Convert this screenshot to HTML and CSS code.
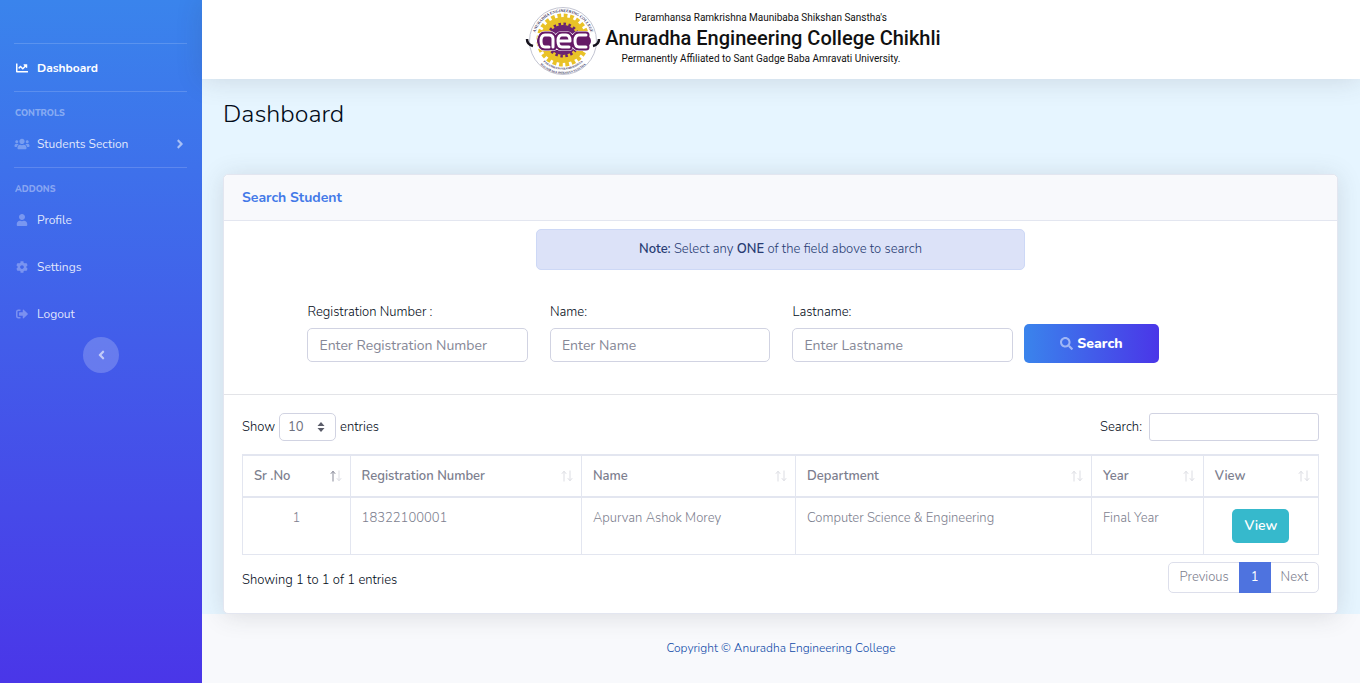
FILE: index.html
```html
<!DOCTYPE html>
<html lang="en">
<head>
<meta charset="utf-8">
<meta name="viewport" content="width=device-width, initial-scale=1">
<title>Dashboard</title>
<link rel="stylesheet" href="styles.css">
</head>
<body>
<svg class="sprite" aria-hidden="true">
  <symbol id="chart" viewBox="0 0 512 512"><path d="M496 384H64V80c0-8.840-7.160-16-16-16H16C7.160 64 0 71.160 0 80v336c0 17.670 14.330 32 32 32h464c8.840 0 16-7.160 16-16v-32c0-8.840-7.160-16-16-16zM464 96H345.940c-21.380 0-32.090 25.850-16.970 40.970l32.400 32.400L288 242.750l-73.370-73.370c-12.500-12.500-32.760-12.500-45.250 0l-68.690 68.690c-6.250 6.250-6.250 16.380 0 22.630l22.620 22.620c6.250 6.250 16.380 6.250 22.630 0L192 237.250l73.370 73.370c12.500 12.500 32.760 12.500 45.250 0l96-96 32.400 32.400c15.120 15.120 40.970 4.410 40.970-16.970V112c.01-8.840-7.150-16-15.990-16z"/></symbol>
  <symbol id="users" viewBox="0 0 640 512"><path d="M96 224c35.3 0 64-28.7 64-64s-28.7-64-64-64-64 28.7-64 64 28.7 64 64 64zm448 0c35.3 0 64-28.7 64-64s-28.7-64-64-64-64 28.7-64 64 28.7 64 64 64zm32 32h-64c-17.6 0-33.5 7.1-45.1 18.6 40.3 22.1 68.9 62 75.1 109.4h66c17.7 0 32-14.3 32-32v-32c0-35.3-28.7-64-64-64zm-256 0c61.900 0 112-50.100 112-112S381.900 32 320 32 208 82.100 208 144s50.100 112 112 112zm76.800 32h-8.300c-20.800 10-43.900 16-68.500 16s-47.600-6-68.500-16h-8.300C179.600 288 128 339.600 128 403.200V432c0 26.500 21.500 48 48 48h288c26.500 0 48-21.500 48-48v-28.800c0-63.600-51.600-115.200-115.200-115.200zm-223.700-13.400C161.500 263.100 145.600 256 128 256H64c-35.300 0-64 28.700-64 64v32c0 17.700 14.300 32 32 32h65.900c6.300-47.400 34.900-87.300 75.200-109.400z"/></symbol>
  <symbol id="user" viewBox="0 0 448 512"><path d="M224 256c70.7 0 128-57.3 128-128S294.7 0 224 0 96 57.3 96 128s57.3 128 128 128zm89.6 32h-16.7c-22.2 10.2-46.9 16-72.9 16s-50.6-5.8-72.9-16h-16.700C60.200 288 0 348.200 0 422.400V464c0 26.500 21.500 48 48 48h352c26.500 0 48-21.500 48-48v-41.600c0-74.200-60.200-134.400-134.400-134.400z"/></symbol>
  <symbol id="cog" viewBox="0 0 512 512"><path d="M487.4 315.7l-42.6-24.6c4.3-23.2 4.3-47 0-70.2l42.6-24.6c4.9-2.8 7.1-8.6 5.5-14-11.1-35.6-30-67.8-54.7-94.6-3.8-4.1-10-5.1-14.8-2.3L380.8 110c-17.9-15.4-38.5-27.3-60.8-35.1V25.8c0-5.6-3.9-10.5-9.4-11.7-36.7-8.2-74.3-7.8-109.2 0-5.5 1.2-9.4 6.1-9.4 11.7V75c-22.2 7.9-42.8 19.8-60.8 35.1L88.7 85.5c-4.9-2.8-11-1.9-14.8 2.3-24.7 26.7-43.6 58.9-54.7 94.6-1.7 5.4.6 11.2 5.5 14L67.3 221c-4.3 23.2-4.3 47 0 70.2l-42.6 24.6c-4.9 2.8-7.1 8.6-5.5 14 11.1 35.6 30 67.8 54.7 94.6 3.8 4.1 10 5.1 14.8 2.3l42.6-24.6c17.9 15.4 38.5 27.3 60.8 35.1v49.2c0 5.6 3.9 10.5 9.4 11.7 36.7 8.2 74.3 7.8 109.2 0 5.5-1.2 9.4-6.1 9.4-11.7v-49.2c22.2-7.9 42.8-19.8 60.8-35.1l42.6 24.6c4.9 2.8 11 1.9 14.8-2.3 24.7-26.7 43.6-58.9 54.7-94.6 1.5-5.5-.7-11.3-5.6-14.1zM256 336c-44.1 0-80-35.900-80-80s35.900-80 80-80 80 35.900 80 80-35.900 80-80 80z"/></symbol>
  <symbol id="logout" viewBox="0 0 512 512"><path d="M497 273L329 441c-15 15-41 4.5-41-17v-96H152c-13.3 0-24-10.7-24-24v-96c0-13.3 10.7-24 24-24h136V88c0-21.4 25.9-32 41-17l168 168c9.3 9.4 9.3 24.6 0 34zM192 436v-40c0-6.6-5.4-12-12-12H96c-17.7 0-32-14.3-32-32V160c0-17.7 14.3-32 32-32h84c6.6 0 12-5.4 12-12V76c0-6.6-5.4-12-12-12H96c-53 0-96 43-96 96v192c0 53 43 96 96 96h84c6.6 0 12-5.4 12-12z"/></symbol>
  <symbol id="search" viewBox="0 0 512 512"><path d="M505 442.7L405.3 343c-4.5-4.5-10.6-7-17-7H372c27.6-35.3 44-79.7 44-128C416 93.1 322.9 0 208 0S0 93.1 0 208s93.1 208 208 208c48.3 0 92.7-16.4 128-44v16.3c0 6.4 2.5 12.5 7 17l99.7 99.7c9.4 9.4 24.6 9.4 33.9 0l28.3-28.3c9.4-9.4 9.4-24.6.1-34zM208 336c-70.7 0-128-57.2-128-128 0-70.7 57.2-128 128-128 70.7 0 128 57.2 128 128 0 70.700-57.200 128-128 128z"/></symbol>
  <symbol id="angle" viewBox="0 0 256 512"><path d="M224.3 273l-136 136c-9.4 9.4-24.6 9.4-33.9 0l-22.6-22.6c-9.4-9.4-9.4-24.6 0-33.9l96.4-96.4-96.4-96.4c-9.4-9.4-9.4-24.6 0-33.9L54.3 103c9.4-9.4 24.6-9.4 33.9 0l136 136c9.5 9.4 9.5 24.6.1 34z"/></symbol>
  <symbol id="sort" viewBox="0 0 12 12"><path d="M3 11.500V1.500M.8 3.800L3 1.200l2.200 2.600" fill="none" stroke="currentColor"/><path d="M9 .5v10M6.800 8.200L9 10.800l2.200-2.600" fill="none" stroke="#dcdde3"/></symbol>
</svg>

<aside class="sidebar">
  <nav class="nav">
    <hr class="rule">
    <a class="link active" href="#"><svg class="icon"><use href="#chart"/></svg><span>Dashboard</span></a>
    <hr class="rule">
    <h2 class="group">CONTROLS</h2>
    <a class="link" href="#"><svg class="icon"><use href="#users"/></svg><span>Students Section</span><svg class="caret"><use href="#angle"/></svg></a>
    <hr class="rule">
    <h2 class="group">ADDONS</h2>
    <a class="link" href="#"><svg class="icon"><use href="#user"/></svg><span>Profile</span></a>
    <a class="link" href="#"><svg class="icon"><use href="#cog"/></svg><span>Settings</span></a>
    <a class="link" href="#"><svg class="icon"><use href="#logout"/></svg><span>Logout</span></a>
  </nav>
  <button class="toggle" type="button" aria-label="Collapse sidebar"><svg class="toggle-icon" viewBox="0 0 256 512"><path d="M31.700 239l136-136c9.400-9.400 24.600-9.400 33.900 0l22.600 22.600c9.400 9.400 9.400 24.600 0 33.900L127.900 256l96.400 96.400c9.400 9.400 9.400 24.600 0 33.900L201.700 409c-9.400 9.400-24.600 9.400-33.900 0l-136-136c-9.500-9.400-9.500-24.600-.1-34z"/></svg></button>
</aside>

<div class="page">
  <header class="topbar">
    <svg class="crest" viewBox="0 0 76 72" aria-label="Anuradha Engineering College crest">
      <defs>
        <path id="arc-top" d="M9 36a29 29 0 0 1 58 0"/>
        <path id="arc-bottom" d="M9.500 41a29 29 0 0 0 57 0"/>
        <path id="arc-low" d="M6 42a32.500 32.500 0 0 0 64 0"/>
        <path id="monogram" d="M28 42V34q0-4-4-4h-4q-4 0-4 6t4 6h4M33 36h12q0-6-4-6h-4q-4 0-4 6t4 6h7M61 30h-7q-4 0-4 6t4 6h7"/>
      </defs>
      <circle cx="38" cy="36" r="33.500" fill="#fff" stroke="#c3c5d2"/>
      <circle cx="38" cy="35" r="23" fill="#e9c227"/>
      <circle cx="38" cy="35" r="24" fill="none" stroke="#e9c227" stroke-width="5" stroke-dasharray="3.700 2.583"/>
      <circle cx="38" cy="35" r="15" fill="#6a2270"/>
      <circle cx="38" cy="35" r="16" fill="none" stroke="#6a2270" stroke-width="3" stroke-dasharray="2.500 2.527"/>
      <g class="crest-text">
        <text class="crest-title"><textPath href="#arc-top" startOffset="50%">ANURADHA ENGINEERING COLLEGE</textPath></text>
        <text><textPath href="#arc-bottom" startOffset="50%">PARAMHANSA RAMKRISHNA</textPath><textPath href="#arc-low" startOffset="50%">MAUNIBABA SHIKSHAN SANSTHA</textPath></text>
      </g>
      <path d="M2 34c0 3 2 6 6 7M74 34c0 3-2 6-6 7" fill="none" stroke="#15121c" stroke-width="2.500"/>
      <g fill="none" stroke-linecap="round" stroke-linejoin="round">
        <use href="#monogram" stroke="#fff" stroke-width="8"/>
        <use href="#monogram" stroke="#651a66" stroke-width="7"/>
        <path d="M18 36h42" stroke="#651a66" stroke-width="12"/>
        <use href="#monogram" stroke="#fff" stroke-width="3"/>
      </g>
    </svg>
    <div class="brand">
      <p class="brand-line">Paramhansa Ramkrishna Maunibaba Shikshan Sanstha's</p>
      <p class="brand-name">Anuradha Engineering College Chikhli</p>
      <p class="brand-line">Permanently Affiliated to Sant Gadge Baba Amravati University.</p>
    </div>
  </header>

  <main class="content">
    <h1 class="title">Dashboard</h1>
    <section class="card">
      <h2 class="card-head">Search Student</h2>
      <div class="note"><b>Note:</b> Select any <b>ONE</b> of the field above to search</div>
      <form class="search-form">
        <div class="fields">
          <div class="field"><label for="reg">Registration Number :</label><input id="reg" class="input" type="text" placeholder="Enter Registration Number"></div>
          <div class="field"><label for="first">Name:</label><input id="first" class="input" type="text" placeholder="Enter Name"></div>
          <div class="field"><label for="last">Lastname:</label><input id="last" class="input" type="text" placeholder="Enter Lastname"></div>
        </div>
        <button class="search-btn" type="button"><svg class="search-icon"><use href="#search"/></svg>Search</button>
      </form>
      <hr class="divider">
      <div class="results">
        <div class="tools">
          <div class="length">
            <label for="length">Show</label>
            <span class="select-wrap">
              <select id="length" class="select"><option>10</option><option>25</option><option>50</option></select>
              <svg class="select-arrow" viewBox="0 0 8 10"><path d="M4 0l3.500 4h-7zM4 10l3.500-4h-7z"/></svg>
            </span>
            <span>entries</span>
          </div>
          <div class="filter"><label for="filter">Search:</label><input id="filter" class="filter-input" type="search"></div>
        </div>
        <table class="table">
          <colgroup><col class="c1"><col class="c2"><col class="c3"><col class="c4"><col class="c5"><col class="c6"></colgroup>
          <thead><tr>
            <th><div class="th">Sr .No<svg class="sort sorted"><use href="#sort"/></svg></div></th>
            <th><div class="th">Registration Number<svg class="sort"><use href="#sort"/></svg></div></th>
            <th><div class="th">Name<svg class="sort"><use href="#sort"/></svg></div></th>
            <th><div class="th">Department<svg class="sort"><use href="#sort"/></svg></div></th>
            <th><div class="th">Year<svg class="sort"><use href="#sort"/></svg></div></th>
            <th><div class="th">View<svg class="sort"><use href="#sort"/></svg></div></th>
          </tr></thead>
          <tbody><tr>
            <td class="center">1</td><td>18322100001</td><td>Apurvan Ashok Morey</td><td>Computer Science &amp; Engineering</td><td>Final Year</td>
            <td class="center"><button class="view-btn" type="button">View</button></td>
          </tr></tbody>
        </table>
        <div class="table-foot">
          <p class="info">Showing 1 to 1 of 1 entries</p>
          <nav class="pager" aria-label="Pages"><a class="page-link" href="#">Previous</a><a class="page-link current" href="#">1</a><a class="page-link" href="#">Next</a></nav>
        </div>
      </div>
    </section>
  </main>
  <footer class="footer">Copyright © Anuradha Engineering College</footer>
</div>
</body>
</html>
```
FILE: styles.css
```css
* { box-sizing: border-box; }

body {
  margin: 0;
  display: flex;
  min-height: 100vh;
  font: 300 13px/20px Nunito, Lato, sans-serif;
  color: #020b18;
  background: #f8f9fc;
}

h1, h2, p { margin: 0; }
a { text-decoration: none; }
button, input, select { font-family: inherit; }
.sprite { position: absolute; width: 0; height: 0; }

.sidebar {
  width: 202px;
  flex-shrink: 0;
  padding-top: 43px;
  background: linear-gradient(180deg, #3a84ec 0%, #4a36e8 100%);
  display: flex;
  flex-direction: column;
  align-items: center;
}
.nav { width: 100%; padding: 0 15px 0 14px; }
.rule { height: 1px; margin: 0; border: 0; background: rgba(255, 255, 255, 0.16); }
.link {
  display: flex;
  align-items: center;
  height: 47px;
  gap: 7px;
  font-size: 12px;
  font-weight: 400;
  color: rgba(255, 255, 255, 0.85);
}
.link.active { color: #fff; font-weight: 700; }
.icon { width: 16px; height: 12px; fill: rgba(255, 255, 255, 0.3); }
.active .icon { fill: #fff; }
.caret { width: 8px; height: 14px; margin-left: auto; margin-right: 3px; fill: rgba(255, 255, 255, 0.55); }
.group {
  padding: 14px 0 0 1px;
  font-size: 9px;
  line-height: 14px;
  font-weight: 800;
  color: rgba(255, 255, 255, 0.4);
}
.toggle {
  width: 36px;
  height: 36px;
  padding: 0;
  border: 0;
  border-radius: 50%;
  background: rgba(255, 255, 255, 0.2);
  display: grid;
  place-items: center;
}
.toggle-icon { width: 7px; height: 14px; fill: rgba(255, 255, 255, 0.6); }

.page { flex: 1; min-width: 0; display: flex; flex-direction: column; }
.topbar {
  z-index: 1;
  height: 79px;
  padding: 3px 96px 0 0;
  display: flex;
  align-items: center;
  justify-content: center;
  gap: 4px;
  background: #fff;
  box-shadow: 0 2px 25px rgba(58, 59, 69, 0.15);
}
.crest { width: 76px; height: 72px; overflow: visible; }
.crest-text { font: 700 3px "Liberation Serif", serif; fill: #3a3560; text-anchor: middle; }
.crest-title { font-size: 4px; }
.brand { padding-bottom: 6px; font-family: Roboto, sans-serif; color: #111; text-align: center; }
.brand-line { padding-right: 24px; font-size: 10px; line-height: 16px; font-weight: 400; }
.brand-name { font-size: 20px; line-height: 25px; font-weight: 500; }

.content { padding: 18px 22px 0 21px; background: #e6f5ff; }
.title { font-size: 25px; line-height: 35px; font-weight: 300; }
.card {
  margin-top: 42px;
  border: 1px solid #e3e6f0;
  border-radius: 5px;
  background: #fff;
  box-shadow: 0 2px 25px rgba(58, 59, 69, 0.15);
}
.card-head {
  padding: 13px 18px 12px;
  border-bottom: 1px solid #e3e6f0;
  border-radius: 5px 5px 0 0;
  background: #f8f9fc;
  color: #4379e8;
  font-size: 14px;
  line-height: 20px;
  font-weight: 700;
}
.note {
  width: 44%;
  margin: 8px auto 0;
  padding: 9px 12px 10px;
  border: 1px solid #cdd8f6;
  border-radius: 5px;
  background: #dce2f8;
  color: #283c73;
  text-align: center;
}
.note b { font-weight: 600; }
.search-form { display: flex; align-items: flex-end; gap: 11px; padding: 32px 16% 31px 7.5%; }
.fields { flex: 1; display: flex; gap: 22px; padding-bottom: 1px; }
.field { flex: 1; min-width: 0; display: flex; flex-direction: column; gap: 6px; }
.input {
  width: 100%;
  height: 34px;
  padding: 0 11px;
  border: 1px solid #d1d3e2;
  border-radius: 5px;
  font-size: 14px;
  font-weight: 400;
}
.input::placeholder { color: #858796; }
.search-btn {
  width: 135px;
  height: 39px;
  border: 0;
  border-radius: 5px;
  background: linear-gradient(90deg, #3a84ec, #4a36e8);
  color: #fff;
  font-size: 14px;
  font-weight: 800;
  display: flex;
  align-items: center;
  justify-content: center;
  gap: 4px;
}
.search-icon { width: 13px; height: 13px; fill: rgba(255, 255, 255, 0.5); }
.divider { height: 1px; margin: 0; border: 0; background: #e3e4e8; }

.results { padding: 18px 18px 20px; }
.tools { display: flex; justify-content: space-between; }
.length, .filter { display: flex; align-items: center; gap: 4px; }
.select-wrap { position: relative; display: flex; }
.select {
  appearance: none;
  width: 57px;
  height: 28px;
  padding: 0 8px;
  border: 1px solid #d1d3e2;
  border-radius: 5px;
  background: #fff;
  color: #6e707e;
  font-size: 13px;
  font-weight: 400;
}
.select-arrow { position: absolute; right: 11px; top: 9px; width: 8px; height: 10px; fill: #5a5c69; pointer-events: none; }
.filter { gap: 7px; }
.filter-input { width: 170px; height: 28px; border: 1px solid #d1d3e2; border-radius: 3px; }

.table {
  width: 100%;
  margin-top: 13px;
  border-collapse: collapse;
  table-layout: fixed;
  color: #7c7e8e;
}
.c1 { width: 10%; }
.c2 { width: 21.5%; }
.c3 { width: 19.9%; }
.c4 { width: 27.5%; }
.c5 { width: 10.4%; }
.c6 { width: 10.7%; }
th, td { padding: 11px; border: 1px solid #e3e6f0; text-align: left; vertical-align: top; }
td { line-height: 18px; }
th { padding: 10px 8px 10px 11px; border-top-width: 2px; border-bottom-width: 2px; font-weight: 600; }
.th { display: flex; align-items: center; justify-content: space-between; }
.sort { width: 12px; height: 12px; color: #dcdde3; }
.sorted { color: #858796; }
td.center { text-align: center; }
.view-btn {
  height: 34px;
  padding: 0 12px 1px;
  border: 0;
  border-radius: 5px;
  background: #36b9cc;
  color: #fff;
  font-size: 14px;
  font-weight: 600;
  display: block;
  margin: 0 auto;
}
.table-foot { display: flex; justify-content: space-between; align-items: flex-start; padding-top: 7px; }
.info { padding-top: 8px; }
.pager { display: flex; border: 1px solid #dddfeb; border-radius: 5px; }
.page-link { padding: 4px 11px; line-height: 21px; color: #7c7e8e; }
.page-link:first-child { padding-right: 10px; }
.page-link:last-child { padding: 4px 10px; }
.page-link.current { margin: -1px 0; padding: 5px 12px; background: #4e73df; color: #fff; font-weight: 400; }

.footer { padding: 24px 0; text-align: center; font-size: 12px; line-height: 20px; color: #0f4aa8; }
```
